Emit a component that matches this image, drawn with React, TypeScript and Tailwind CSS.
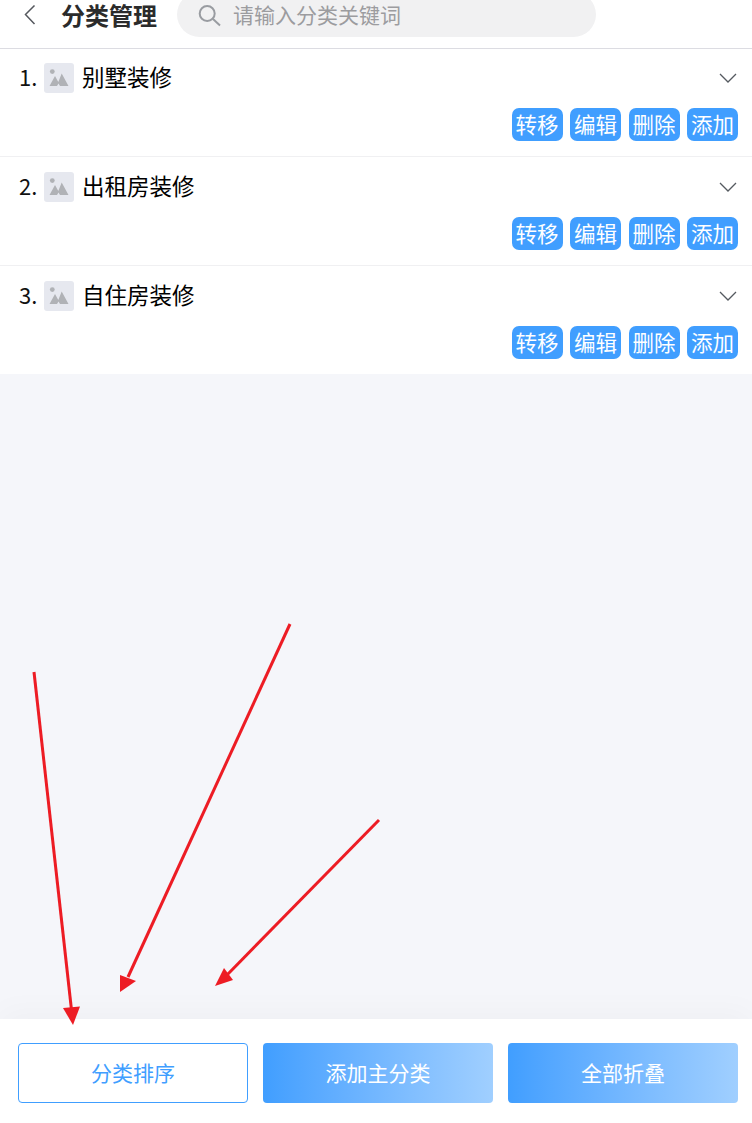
import React from "react";

const categories = ["别墅装修", "出租房装修", "自住房装修"];
const actions = ["转移", "编辑", "删除", "添加"];
const fontStack = "font-['Noto_Sans_CJK_SC','Noto_Sans',sans-serif]";

function ImagePlaceholder() {
  return (
    <div className="flex h-[30px] w-[30px] items-center justify-center rounded-[3px] bg-[#e6e8ef]">
      <svg width="30" height="30" viewBox="0 0 30 30">
        <circle cx="8.3" cy="8.6" r="2.4" fill="#b0b2b6" />
        <path d="M5.5 23 L11 13 L14.3 19 L17.7 10.5 L24.5 23 L16 23 L14.5 20.5 L13 23 Z" fill="#b0b2b6" />
      </svg>
    </div>
  );
}

function CategoryRow({ index, name }: { index: number; name: string }) {
  return (
    <div className="h-[109px] border-b border-[#f0f0f2] bg-white pl-[18px] pr-[14px] last:h-[108px] last:border-b-0">
      <div className="flex h-[60px] items-center">
        <span className="mb-[4px] w-[26px] pl-[1px] text-[22px] leading-none text-[#111]">{index}.</span>
        <ImagePlaceholder />
        <span className="mb-[4px] ml-[8px] text-[22.5px] leading-none text-black">{name}</span>
        <svg className="ml-auto mr-[1px]" width="18" height="10" viewBox="0 0 18 10" fill="none">
          <path d="M1 1 L9 9 L17 1" stroke="#555a60" strokeWidth="1.3" />
        </svg>
      </div>
      <div className="flex justify-end gap-[7.5px]">
        {actions.map((action) => (
          <button
            key={action}
            className="flex h-[33px] w-[51px] items-center justify-center rounded-[7px] bg-[#409eff] pb-[1px] text-[21.5px] leading-none text-white"
          >
            {action}
          </button>
        ))}
      </div>
    </div>
  );
}

export default function App() {
  return (
    <div className={`relative flex h-[1123px] flex-col overflow-hidden bg-white ${fontStack}`}>
      {/* Header */}
      <header className="relative z-10 -mb-px flex h-[49px] shrink-0 items-start border-b border-[#dcdce2] bg-white">
        <svg className="ml-[24px] mt-[5px]" width="12" height="20" viewBox="0 0 12 20" fill="none">
          <path d="M10.5 0.5 L1.5 9.5 L10.5 19" stroke="#55585e" strokeWidth="1.5" />
        </svg>
        <h1 className="ml-[25px] mt-[1px] text-[24px] font-bold leading-[28px] text-[#2b2b2b]">分类管理</h1>
        <div className="ml-[20px] -mt-[8px] flex h-[45px] w-[419px] items-center rounded-full bg-[#f1f1f2] pl-[21px]">
          <svg width="24" height="24" viewBox="0 0 24 24" fill="none">
            <circle cx="9.2" cy="10.5" r="7.5" stroke="#999ca1" strokeWidth="2" />
            <path d="M15 16 L22 22.5" stroke="#999ca1" strokeWidth="2" />
          </svg>
          <span className="ml-[11px] text-[21px] leading-none text-[#9c9c9f]">请输入分类关键词</span>
        </div>
      </header>

      {/* List */}
      <main className="flex min-h-0 flex-1 flex-col bg-[#f5f6fa]">
        {categories.map((name, i) => (
          <CategoryRow key={name} index={i + 1} name={name} />
        ))}
      </main>

      {/* Footer */}
      <footer className="flex h-[104px] shrink-0 gap-[15px] bg-white pl-[18px] pr-[14px] pt-[24px] shadow-[0_-6px_30px_rgba(0,0,0,0.03)]">
        <button className="h-[60px] w-[230px] rounded-[4px] border border-[#409eff] bg-white text-[21px] text-[#409eff]">
          分类排序
        </button>
        <button className="h-[60px] w-[230px] rounded-[4px] bg-gradient-to-r from-[#409eff] to-[#a0cfff] text-[21px] text-white">
          添加主分类
        </button>
        <button className="h-[60px] w-[230px] rounded-[4px] bg-gradient-to-r from-[#409eff] to-[#a0cfff] text-[21px] text-white">
          全部折叠
        </button>
      </footer>

      {/* Annotation arrows drawn over the screenshot */}
      <svg className="pointer-events-none absolute inset-0 z-20" width="752" height="1123" viewBox="0 0 752 1123" fill="none">
        <path d="M34 672 L71.5 1010" stroke="#ed1c24" strokeWidth="3" />
        <polygon points="73,1025 63,1008 80,1006.5" fill="#ed1c24" />
        <path d="M290 624 L128 977" stroke="#ed1c24" strokeWidth="3" />
        <polygon points="120,992 120,975 136,981" fill="#ed1c24" />
        <path d="M379 820 L227 975" stroke="#ed1c24" strokeWidth="3" />
        <polygon points="215,986 224,968 233,980" fill="#ed1c24" />
      </svg>
    </div>
  );
}
